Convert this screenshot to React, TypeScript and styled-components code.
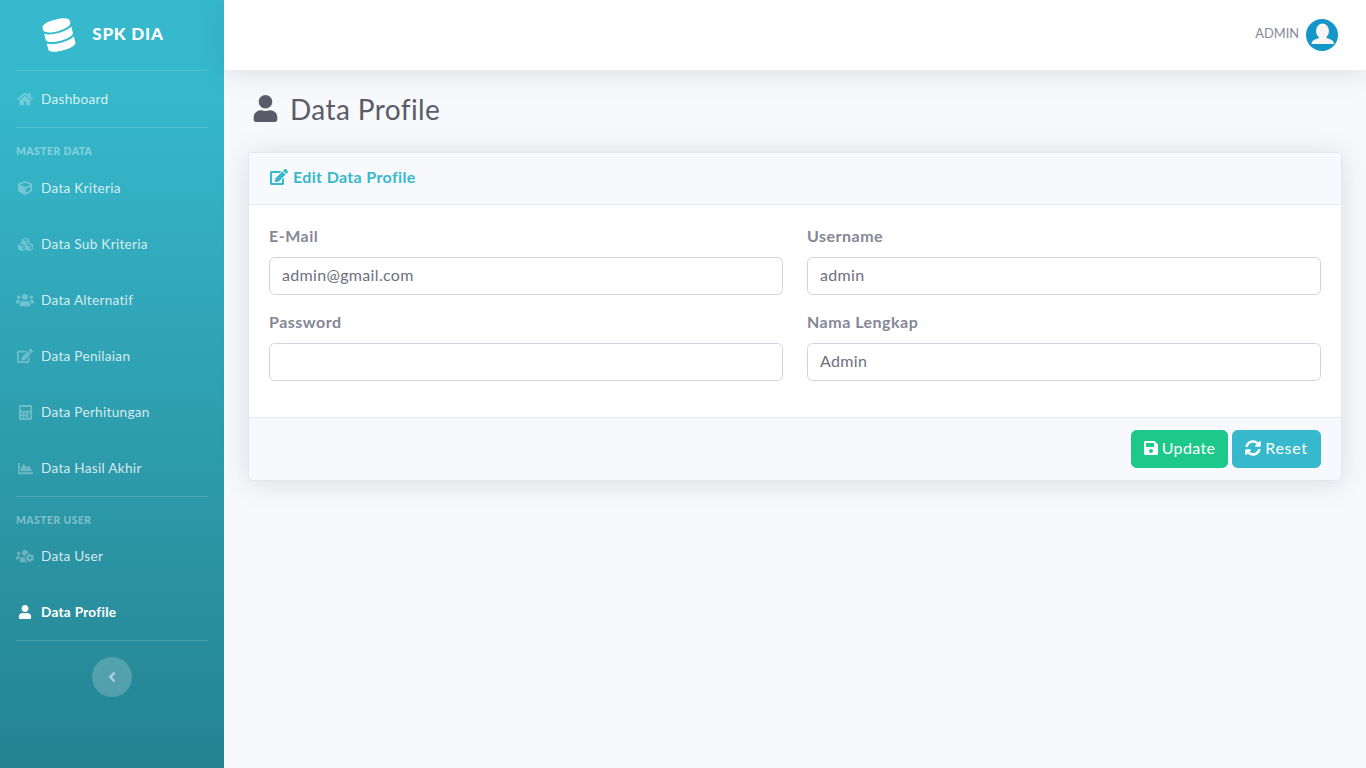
import React from 'react';
import styled, { createGlobalStyle } from 'styled-components';
import {
  FaAngleLeft,
  FaCalculator,
  FaChartArea,
  FaCube,
  FaCubes,
  FaDatabase,
  FaEdit,
  FaHome,
  FaSave,
  FaSyncAlt,
  FaUser,
  FaUsers,
  FaUsersCog,
} from 'react-icons/fa';

const fontStack = `Lato, 'Open Sans', sans-serif`;

const GlobalStyle = createGlobalStyle`
  * { box-sizing: border-box; }
  html, body { margin: 0; padding: 0; }
  body {
    font-family: ${fontStack};
    font-size: 16px;
    line-height: 1.5;
    color: #858796;
    background: #f8f9fc;
  }
`;

const Wrapper = styled.div`
  display: flex;
  min-height: 100vh;
`;

const Sidebar = styled.aside`
  width: 224px;
  flex-shrink: 0;
  display: flex;
  flex-direction: column;
  background: linear-gradient(180deg, #36b9cc 10%, #258391 100%);
`;

const Brand = styled.div`
  height: 70px;
  display: flex;
  align-items: center;
  justify-content: center;
  color: #fff;

  svg {
    transform: translateX(-1px) rotate(-15deg);
  }
`;

const BrandText = styled.span`
  margin: 0 16px;
  padding-bottom: 2px;
  font-size: 17px;
  font-weight: 900;
  letter-spacing: 0.8px;
`;

const Divider = styled.hr<{ $gap?: boolean }>`
  height: 1px;
  margin: 0 16px ${(p) => (p.$gap ? '16px' : '0')};
  border: 0;
  background: rgba(255, 255, 255, 0.15);
`;

const Heading = styled.div<{ $spaced?: boolean }>`
  padding: 0 16px;
  margin-bottom: ${(p) => (p.$spaced ? '1px' : '0')};
  font-size: 10.4px;
  line-height: 15px;
  font-weight: 900;
  letter-spacing: 0.45px;
  text-transform: uppercase;
  color: rgba(255, 255, 255, 0.4);
`;

const NavItem = styled.a<{ $active?: boolean }>`
  height: 56px;
  padding: 0 16px;
  display: flex;
  align-items: center;
  font-size: 13.6px;
  letter-spacing: 0.28px;
  font-weight: ${(p) => (p.$active ? 700 : 400)};
  color: ${(p) => (p.$active ? '#fff' : 'rgba(255, 255, 255, 0.8)')};

  svg {
    color: ${(p) => (p.$active ? '#fff' : 'rgba(255, 255, 255, 0.3)')};
  }
`;

const NavIcon = styled.span`
  width: 18px;
  margin-right: 7px;
  flex-shrink: 0;
  display: flex;
  justify-content: center;
`;

const Toggle = styled.button`
  width: 40px;
  height: 40px;
  align-self: center;
  padding: 0;
  border: 0;
  border-radius: 50%;
  display: flex;
  align-items: center;
  justify-content: center;
  background: rgba(255, 255, 255, 0.2);
  color: rgba(255, 255, 255, 0.5);
`;

const Content = styled.div`
  flex: 1;
  min-width: 0;
  display: flex;
  flex-direction: column;
`;

const Topbar = styled.header`
  height: 70px;
  padding-right: 28px;
  display: flex;
  align-items: center;
  justify-content: flex-end;
  gap: 7px;
  background: #fff;
  box-shadow: 0 2.4px 28px 0 rgba(58, 59, 69, 0.15);
`;

const UserName = styled.span`
  padding-bottom: 2px;
  font-size: 12.8px;
  color: #858796;
  text-transform: uppercase;
`;

const Avatar = styled.svg`
  width: 32px;
  height: 32px;
  display: block;
`;

const Container = styled.main`
  padding: 24px 24px 0;
`;

const PageTitle = styled.h1`
  height: 33.6px;
  margin: 0 0 24px;
  padding-bottom: 4px;
  display: flex;
  align-items: center;
  font-size: 28px;
  line-height: 32px;
  letter-spacing: 0.4px;
  font-weight: 400;
  color: #5a5c69;

  svg {
    margin: 0 11px 0 4px;
  }
`;

const Card = styled.section`
  border: 1px solid #e3e6f0;
  border-radius: 5.6px;
  background: #fff;
  box-shadow: 0 2.4px 28px 0 rgba(58, 59, 69, 0.15);
  overflow: hidden;
`;

const CardHeader = styled.div`
  height: 52px;
  padding: 0 20px 2px 21px;
  display: flex;
  align-items: center;
  gap: 5px;
  font-size: 16px;
  letter-spacing: 0.35px;
  font-weight: 700;
  color: #36b9cc;
  background: #f8f9fc;
  border-bottom: 1px solid #e3e6f0;
`;

const CardBody = styled.div`
  padding: 20px;
  display: grid;
  grid-template-columns: 1fr 1fr;
  column-gap: 24px;
`;

const Field = styled.div`
  margin-bottom: 16px;
`;

const Label = styled.label`
  display: block;
  margin-bottom: 10px;
  font-weight: 700;
  line-height: 22px;
  letter-spacing: 0.5px;
  color: #858796;
`;

const Input = styled.input`
  display: block;
  width: 100%;
  height: 38px;
  padding: 5px 12px 7px;
  border: 1px solid #d1d3e2;
  border-radius: 5.6px;
  font-family: inherit;
  font-size: 16px;
  letter-spacing: 0.33px;
  color: #6e707e;
  background: #fff;
  outline: none;
`;

const CardFooter = styled.div`
  padding: 12px 20px;
  display: flex;
  justify-content: flex-end;
  gap: 4px;
  background: #f8f9fc;
  border-top: 1px solid #e3e6f0;
`;

const Button = styled.button<{ $color: string; $width: number; $tracking: number }>`
  width: ${(p) => p.$width}px;
  height: 38px;
  padding: 0 0 2px;
  display: flex;
  align-items: center;
  justify-content: center;
  gap: 4px;
  border: 1px solid ${(p) => p.$color};
  border-radius: 5.6px;
  font-family: inherit;
  font-size: 16px;
  letter-spacing: ${(p) => p.$tracking}px;
  color: #fff;
  background: ${(p) => p.$color};
`;

const SaveIcon = styled(FaSave)`
  width: 14px;
  height: 16px;
`;

type NavEntry = { label: string; icon: React.ReactNode; active?: boolean };

const masterData: NavEntry[] = [
  { label: 'Data Kriteria', icon: <FaCube size={14} /> },
  { label: 'Data Sub Kriteria', icon: <FaCubes size={15} /> },
  { label: 'Data Alternatif', icon: <FaUsers size={18} /> },
  { label: 'Data Penilaian', icon: <FaEdit size={16} /> },
  { label: 'Data Perhitungan', icon: <FaCalculator size={15} /> },
  { label: 'Data Hasil Akhir', icon: <FaChartArea size={15} /> },
];

const masterUser: NavEntry[] = [
  { label: 'Data User', icon: <FaUsersCog size={18} /> },
  { label: 'Data Profile', icon: <FaUser size={14} />, active: true },
];

function NavLink({ label, icon, active }: NavEntry) {
  return (
    <NavItem $active={active}>
      <NavIcon>{icon}</NavIcon>
      {label}
    </NavItem>
  );
}

function App() {
  return (
    <Wrapper>
      <GlobalStyle />
      <Sidebar>
        <Brand>
          <FaDatabase size={32} />
          <BrandText>SPK DIA</BrandText>
        </Brand>
        <Divider />
        <NavLink label="Dashboard" icon={<FaHome size={16} />} />
        <Divider $gap />
        <Heading $spaced>Master Data</Heading>
        {masterData.map((item) => (
          <NavLink key={item.label} {...item} />
        ))}
        <Divider $gap />
        <Heading>Master User</Heading>
        {masterUser.map((item) => (
          <NavLink key={item.label} {...item} />
        ))}
        <Divider $gap />
        <Toggle>
          <FaAngleLeft size={16} />
        </Toggle>
      </Sidebar>
      <Content>
        <Topbar>
          <UserName>Admin</UserName>
          <Avatar viewBox="0 0 32 32">
            <circle cx="16" cy="16" r="16" fill="#1396c8" />
            <ellipse cx="16.500" cy="12" rx="6.500" ry="7.500" fill="#f8f5f3" />
            <path d="M5.500 25c.3-2.500 1-3.500 3.500-4.500 2.500-.9 4.500-1.500 5-3.500h5.500c.500 2 2.500 2.600 5 3.500 2.500 1 3.200 2 3.500 4.500z" fill="#f8f5f3" />
          </Avatar>
        </Topbar>
        <Container>
          <PageTitle>
            <FaUser size={27} />
            Data Profile
          </PageTitle>
          <Card>
            <CardHeader>
              <FaEdit size={18} />
              Edit Data Profile
            </CardHeader>
            <CardBody>
              <Field>
                <Label>E-Mail</Label>
                <Input defaultValue="admin@gmail.com" />
              </Field>
              <Field>
                <Label>Username</Label>
                <Input defaultValue="admin" />
              </Field>
              <Field>
                <Label>Password</Label>
                <Input type="password" />
              </Field>
              <Field>
                <Label>Nama Lengkap</Label>
                <Input defaultValue="Admin" />
              </Field>
            </CardBody>
            <CardFooter>
              <Button $color="#1cc88a" $width={97} $tracking={0.35}>
                <SaveIcon />
                Update
              </Button>
              <Button $color="#36b9cc" $width={89} $tracking={0.7}>
                <FaSyncAlt size={16} />
                Reset
              </Button>
            </CardFooter>
          </Card>
        </Container>
      </Content>
    </Wrapper>
  );
}

export default App;
